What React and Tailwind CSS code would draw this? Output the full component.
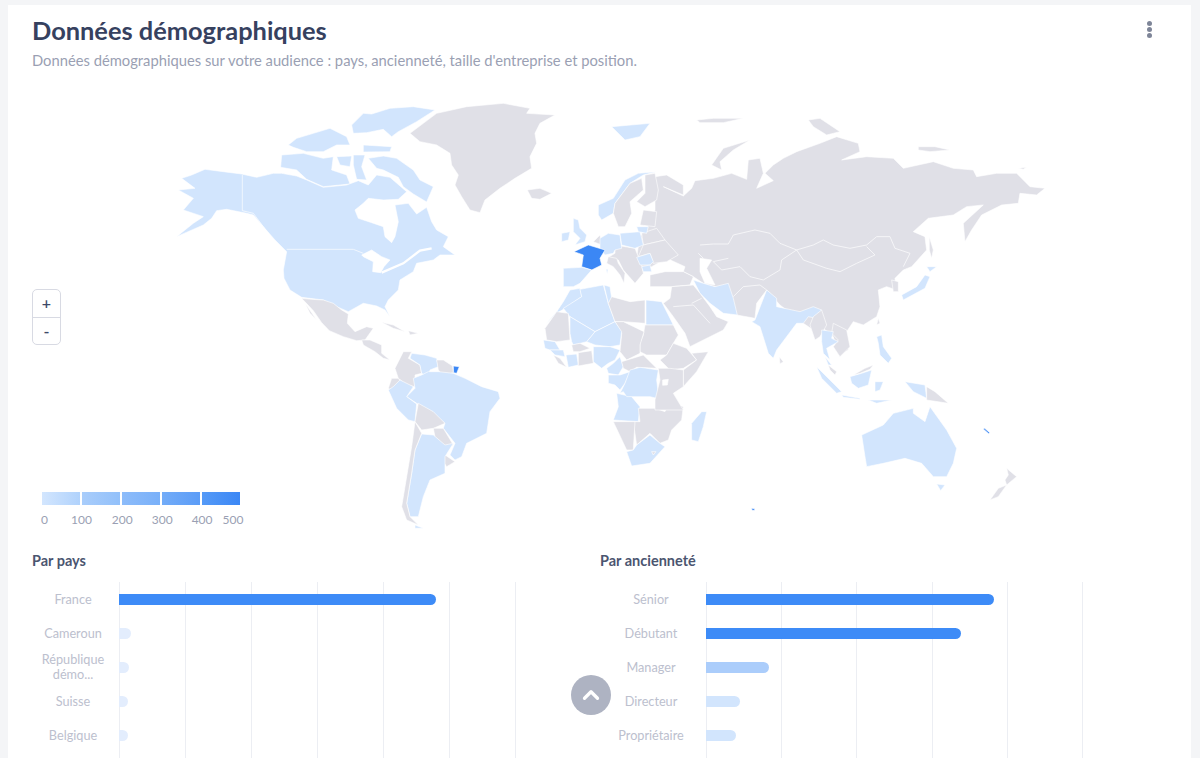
import React from 'react';
import { ChevronUp } from 'lucide-react';

const fills = {
  g: 'fill-[#e0e0e7]',
  l: 'fill-[#d2e5fd]',
  b: 'fill-[#3b87f5]',
  w: 'fill-white',
};

// each group is traced in its own 3x space, then scaled back on the map
const mapGroups = [
  {
    at: 'translate(150 90) scale(0.3333)',
    shapes: [
      ['l', '605,105 640,70 665,72 720,55 790,50 855,60 800,95 745,125 725,140 700,118 650,128 610,130'],
      ['l', '640,165 725,170 720,185 640,186'],
      ['l', '415,165 440,145 490,130 540,115 590,140 600,165 560,165 520,185 470,185 430,172'],
      ['l', '395,195 460,190 520,205 550,200 545,240 590,255 600,282 520,290 470,268 440,240 392,232'],
      ['l', '560,200 605,198 600,230 570,225'],
      ['l', '610,195 645,195 635,230 650,270 620,268 610,225'],
      ['l', '655,205 700,198 740,205 790,240 810,270 850,290 830,336 790,312 760,290 745,262 700,240 680,235'],
      ['l', '95,265 125,255 165,238 220,245 275,252 320,262 370,250 395,250 440,258 470,270 520,292 590,285 625,272 655,285 680,255 720,262 770,305 745,328 700,330 655,325 640,340 615,360 625,385 665,398 700,410 705,440 725,458 735,440 745,395 735,345 775,340 800,372 830,352 845,395 860,420 895,440 880,470 915,495 870,495 850,510 800,520 790,545 750,570 745,600 715,630 705,650 720,680 705,660 680,648 640,640 595,665 560,650 520,630 455,622 420,600 402,565 400,540 410,485 375,450 340,410 310,375 290,370 230,358 200,362 185,385 160,405 80,440 130,400 160,380 100,360 130,325 85,300 135,295'],
      ['w', '635,495 665,480 695,500 720,510 702,530 692,548 668,545 670,515 640,500'],
      ['g', '780,130 860,70 950,50 1060,40 1140,55 1130,70 1215,75 1170,100 1155,130 1160,160 1140,200 1145,235 1095,265 1050,295 1005,330 990,368 960,360 935,320 915,285 925,255 905,225 900,190 860,165 810,155'],
      ['g', '1132,300 1170,295 1205,310 1170,328 1145,325'],
    ],
    lines: ['277,255 277,362 310,370 370,450', '410,478 610,478 640,490'],
    channels: ['695,548 760,520 810,482 845,475'],
  },
  {
    at: 'translate(300 290) scale(0.3333)',
    shapes: [
      ['g', '5,25 35,28 70,30 100,40 125,60 145,72 142,100 165,125 200,110 220,115 195,150 170,152 130,140 88,122 65,98 40,62'],
      ['g', '15,40 50,90 30,70'],
      ['g', '185,150 210,150 245,165 245,190 270,210 250,205 225,185 190,165'],
      ['g', '245,97 280,105 315,125 280,115'],
      ['g', '325,122 355,130 330,135'],
      ['g', '310,185 335,185 325,205 360,225 365,250 345,255 345,290 320,285 295,265 285,235 295,215'],
      ['g', '265,295 275,265 295,265 310,285 275,302'],
      ['l', '335,190 375,195 410,205 415,230 390,240 385,262 365,250 360,225 330,205'],
      ['g', '410,210 430,210 458,228 460,248 430,258 415,240'],
    ],
    lines: [],
  },
  {
    at: 'translate(350 280) scale(0.3333)',
    shapes: [
      ['l', '170,350 195,325 190,295 215,285 235,275 265,275 310,280 345,295 395,320 445,335 450,355 420,395 410,460 350,490 335,530 315,540 300,525 315,490 280,445 285,430 250,400 200,370'],
      ['b', '310,258 328,260 320,280 311,278'],
      ['l', '115,330 130,320 150,300 190,320 170,350 200,372 195,425 175,420 140,385'],
      ['g', '205,370 250,395 285,430 250,445 215,450 195,425'],
      ['g', '250,445 280,445 310,495 290,505 255,470'],
      ['g', '285,525 315,545 290,560 280,545'],
      ['l', '215,462 250,465 285,495 310,490 285,530 285,580 240,600 220,650 205,710 180,710 170,670 185,580 195,510'],
      ['g', '195,425 215,460 195,510 185,580 170,670 180,710 205,735 170,720 155,680 170,590 185,500'],
      ['l', '195,735 220,745 195,745'],
      ['l', '800,340 845,350 870,380 865,425 790,420 805,380'],
      ['g', '865,385 915,385 945,395 960,365 1000,380 995,420 965,450 955,480 930,490 900,460 860,495 850,425 870,425'],
      ['g', '790,425 855,425 850,510 830,510'],
      ['l', '830,515 850,510 860,495 900,465 930,490 945,500 900,550 845,558'],
      ['g', '905,515 918,515 910,525'],
      ['l', '1055,395 1070,395 1060,440 1045,485 1025,480 1025,430'],
    ],
    lines: [],
  },
  {
    at: 'translate(540 280) scale(0.3333)',
    shapes: [
      ['l', '15,135 50,95 70,65 90,30 120,25 125,50 75,85 50,100'],
      ['l', '70,85 125,50 120,28 190,15 205,70 225,125 165,155 90,110'],
      ['l', '192,15 210,20 215,55 205,70'],
      ['g', '205,70 215,50 270,65 315,60 315,130 250,125 225,125'],
      ['l', '318,60 365,65 400,135 318,135'],
      ['g', '315,135 400,135 415,165 400,190 380,225 320,225 300,215 300,190 310,165'],
      ['g', '225,125 250,125 312,155 300,195 300,220 260,240 240,215 245,160'],
      ['l', '165,155 225,125 245,155 240,195 210,200 165,195 140,185'],
      ['l', '90,110 165,155 140,185 100,195 95,185 90,160'],
      ['g', '15,145 50,95 85,100 90,180 50,185 20,180'],
      ['l', '10,180 45,185 60,210 30,210 15,205'],
      ['l', '30,210 70,210 75,230 45,225'],
      ['g', '95,195 120,190 150,205 120,215 100,215'],
      ['g', '40,225 60,235 80,262 55,250'],
      ['l', '78,225 110,222 115,255 85,262'],
      ['g', '115,218 155,212 160,250 115,258'],
      ['l', '160,200 210,200 240,210 225,240 205,250 185,265 160,245'],
      ['l', '240,230 250,260 235,285 205,280 200,265 220,250'],
      ['l', '205,285 240,285 270,275 255,310 240,330 225,315 205,310'],
      ['g', '245,245 310,225 350,265 290,262 270,275 250,265'],
      ['l', '270,270 300,262 355,270 350,300 355,340 350,355 330,350 300,350 260,350 250,335 240,340 255,310'],
      ['g', '400,190 440,205 470,240 430,265 390,270 360,240 380,225'],
      ['g', '455,220 505,215 470,275 430,320 430,270 470,240'],
      ['g', '355,265 390,265 430,270 430,320 400,340 430,390 345,390 345,360 360,300'],
      ['w', '368,300 385,298 382,315 368,316'],
    ],
    lines: [],
  },
  {
    at: 'translate(600 90) scale(0.3333)',
    shapes: [
      ['g', '165,260 200,255 250,285 250,315 190,290 250,318 275,295 285,272 340,265 395,250 440,268 445,210 480,205 490,250 470,295 520,272 495,250 520,225 550,205 590,185 660,160 710,140 775,160 780,185 725,210 800,200 880,205 910,235 1000,215 1060,235 1120,240 1130,260 1190,250 1250,250 1290,290 1335,295 1310,315 1260,310 1255,340 1205,345 1145,375 1115,420 1095,455 1090,400 1150,345 1100,350 1060,375 985,385 940,425 975,440 980,480 935,530 910,540 885,565 890,600 860,590 835,600 840,650 830,680 790,705 760,695 740,725 745,780 715,795 700,740 670,715 640,720 610,700 540,645 500,600 470,640 465,685 410,675 400,640 385,600 345,590 310,580 280,560 250,545 255,530 200,505 155,530 130,540 110,500 120,440 150,400 165,360'],
      ['w', '300,505 335,510 320,535 345,585 315,580 300,545'],
      ['l', '280,570 310,580 345,590 385,580 400,625 412,675 370,670 330,640 300,610'],
      ['g', '150,555 195,545 250,545 280,560 270,585 215,590 150,590'],
      ['g', '190,640 210,625 215,590 280,585 300,610 330,650 350,680 385,695 370,720 270,770 255,730 220,680'],
      ['l', '465,690 500,600 530,625 530,650 600,665 640,650 665,660 650,685 625,680 610,700 590,700 530,780 520,805 505,790 480,710 455,695'],
      ['g', '538,800 550,815 540,822'],
      ['g', '640,680 665,660 680,705 660,740 645,750 630,705'],
      ['g', '700,700 740,720 750,770 720,800 700,770 715,750 695,730'],
      ['l', '665,720 700,725 695,745 715,755 680,775 690,810 670,790 665,755'],
      ['g', '875,570 895,575 895,605 880,605'],
      ['l', '905,615 950,590 975,555 990,560 975,595 910,630'],
      ['l', '980,530 1010,530 990,545'],
      ['g', '988,440 1000,480 995,505 988,480'],
      ['g', '335,225 370,175 450,150 400,180 360,215 365,240'],
      ['g', '625,90 660,85 720,125 680,135 640,110'],
      ['g', '955,170 1005,170 1050,180 990,185 955,180'],
      ['g', '1255,235 1280,232 1270,238'],
      ['g', '290,90 340,85 430,85 370,98 300,98'],
      ['l', '35,110 150,100 120,140 75,150'],
    ],
    lines: [
      '300,465 340,462 385,462 400,435 465,420 510,430 540,460 590,480 640,465 670,450 700,465 750,475 800,465 830,440 870,440 885,475 930,490 910,530',
      '590,480 610,510 680,535 720,545 770,520 825,495 800,470',
      '590,480 545,510 540,540 490,570 450,560 420,530 365,540 340,515 385,505',
      '295,490 310,505',
      '400,620 430,590 480,585 500,600',
      '275,640 305,625',
      '220,650 280,645 330,700',
    ],
  },
  {
    at: 'translate(550 170) scale(0.3333)',
    shapes: [
      ['l', '145,105 190,85 225,30 265,10 320,5 280,15 240,40 195,100 190,130 155,150 145,135'],
      ['g', '195,100 240,40 275,25 280,60 240,95 245,130 225,170 205,170 190,130'],
      ['g', '285,15 315,10 325,60 320,90 285,110 260,95 285,70'],
      ['g', '280,120 320,125 315,170 270,165'],
      ['l', '70,145 85,150 90,175 110,195 105,215 75,225 90,205 70,185'],
      ['l', '35,190 60,185 55,210 35,215'],
      ['g', '130,215 150,195 155,225'],
      ['g', '275,190 320,175 345,210 280,225'],
      ['g', '195,225 255,235 275,285 280,310 255,340 220,300 205,270 175,262 195,250'],
      ['l', '150,205 175,190 210,195 215,235 195,240 190,250 165,255 150,235'],
      ['l', '210,190 270,185 280,225 255,235 215,225'],
      ['l', '260,170 295,170 290,190 265,185'],
      ['g', '280,225 345,210 385,255 350,275 310,280 300,250 265,260'],
      ['b', '72,245 115,225 165,240 150,265 155,285 125,300 95,290 100,255'],
      ['l', '40,295 95,292 125,300 90,340 70,350 40,350'],
      ['g', '175,260 200,265 205,280 225,310 222,340 210,315 190,290 170,280'],
      ['l', '168,298 174,298 172,312'],
      ['l', '260,262 300,250 310,275 300,285 270,285'],
      ['l', '275,290 300,285 305,305 280,305'],
    ],
    lines: [],
  },
  {
    at: 'translate(750 280) scale(0.3333)',
    shapes: [
      ['l', '380,170 395,165 400,200 425,235 415,250 390,225 385,190'],
      ['g', '385,115 390,130 380,135'],
      ['g', '235,255 260,275 255,285 240,270'],
      ['l', '225,230 245,255 235,255'],
      ['l', '200,260 240,300 275,335 260,340 215,295'],
      ['l', '300,290 335,280 365,270 355,315 325,325 305,310'],
      ['g', '310,285 345,265 370,255 360,268 330,280'],
      ['l', '275,345 330,355 330,358 280,352'],
      ['l', '375,305 400,305 390,330 375,335'],
      ['l', '465,305 525,315 530,355 490,335'],
      ['g', '530,320 555,335 595,370 530,360'],
      ['l', '355,360 425,360 380,370'],
      ['l', '335,465 400,435 430,400 490,385 490,400 525,425 540,380 590,450 620,505 610,550 590,590 550,590 515,550 465,535 400,550 350,560 345,530'],
      ['l', '560,612 585,615 572,632'],
      ['g', '770,565 800,590 770,615 765,600 775,585'],
      ['g', '770,615 745,650 720,660 745,625'],
      ['b', '700,447 704,445 719,458 716,461'],
      ['b', '5,685 14,686 14,691 6,691'],
    ],
    lines: [],
  },
];

const legendSteps = [
  'from-[#d3e6fe] to-[#b0d2fc]',
  'from-[#a9cdfb] to-[#92c0fa]',
  'from-[#8dbcfa] to-[#79b0f9]',
  'from-[#73acf8] to-[#5b9cf7]',
  'from-[#559af7] to-[#3b87f5]',
];

const countries = [
  { label: 'France', width: 317, color: 'bg-[#3d8bf7]' },
  { label: 'Cameroun', width: 12, color: 'bg-[#e3edfd]' },
  { label: 'République démo...', width: 10, color: 'bg-[#e3edfd]' },
  { label: 'Suisse', width: 9, color: 'bg-[#e3edfd]' },
  { label: 'Belgique', width: 9, color: 'bg-[#e3edfd]' },
];

const seniority = [
  { label: 'Sénior', width: 288, color: 'bg-[#3d8bf7]' },
  { label: 'Débutant', width: 255, color: 'bg-[#3d8bf7]' },
  { label: 'Manager', width: 63, color: 'bg-[#abcdfb]' },
  { label: 'Directeur', width: 34, color: 'bg-[#d2e5fd]' },
  { label: 'Propriétaire', width: 30, color: 'bg-[#d2e5fd]' },
];

const WorldMap = () => (
  <svg viewBox="8 80 1183 460" className="block w-full h-full">
    {mapGroups.map((group) => (
      <g key={group.at} transform={group.at}>
        {group.shapes.map(([fill, points]) => (
          <polygon key={points} points={points} className={`${fills[fill]} stroke-white`} strokeWidth="1.8" strokeLinejoin="round" />
        ))}
        {group.lines.map((points) => (
          <polyline key={points} points={points} fill="none" className="stroke-white" strokeWidth="2" />
        ))}
        {(group.channels || []).map((points) => (
          <polyline key={points} points={points} fill="none" className="stroke-white" strokeWidth="7" />
        ))}
      </g>
    ))}
  </svg>
);

const BarChart = ({ title, rows, gridLines, plotClass, labelClass }) => (
  <div>
    <h3 className="text-[14.5px] leading-[18px] font-bold text-[#4b5570] mb-3">{title}</h3>
    <div className="relative h-[176px]">
      <div className={`absolute top-0 bottom-0 flex justify-between ${plotClass}`}>
        {gridLines.map((n) => (
          <div key={n} className="w-px h-full bg-[#eceef3]" />
        ))}
      </div>
      <div className="relative">
        {rows.map((row) => (
          <div key={row.label} className="flex items-center h-[34px]">
            <div className={`text-center text-[12.7px] leading-[15px] text-[#bcc0ce] ${labelClass}`}>{row.label}</div>
            <div className={`h-[11px] rounded-r-full ${row.color}`} style={{ width: row.width }} />
          </div>
        ))}
      </div>
    </div>
  </div>
);

const App = () => {
  return (
    <div className="relative h-[758px] overflow-hidden bg-[#f4f5f7] pl-2 pr-[9px] pt-[5px] font-['Lato',sans-serif]">
      <div className="h-full bg-white px-6 pt-[9px]">
        <div className="flex justify-between">
          <div>
            <h1 className="text-[25.4px] leading-8 font-bold text-[#36415f]">Données démographiques</h1>
            <p className="text-[14.75px] leading-5 mt-[4px] text-[#9a9fb3]">
              Données démographiques sur votre audience : pays, ancienneté, taille d'entreprise et position.
            </p>
          </div>
          <div className="flex flex-col gap-[1px] mt-[7px] mr-[15px]">
            <span className="w-[5px] h-[5px] rounded-full bg-[#7e8598]" />
            <span className="w-[5px] h-[5px] rounded-full bg-[#7e8598]" />
            <span className="w-[5px] h-[5px] rounded-full bg-[#7e8598]" />
          </div>
        </div>

        <div className="relative h-[460px] -mx-6 mt-[10px]">
          <WorldMap />
          <div className="absolute left-6 top-[209px] w-[29px] h-[56px] flex flex-col border border-[#d8dae3] rounded-[5px] bg-white text-[#3d4a68] text-base font-semibold">
            <button className="flex-1 flex items-center justify-center border-b border-[#d8dae3]">+</button>
            <button className="flex-1 flex items-center justify-center">-</button>
          </div>
          <div className="absolute left-[34px] top-[412px]">
            <div className="flex gap-[2px]">
              {legendSteps.map((step) => (
                <div key={step} className={`w-[38px] h-[13px] bg-gradient-to-r ${step}`} />
              ))}
            </div>
            <div className="flex mt-[7px] text-xs leading-4 text-[#9a9fb3]">
              <span className="ml-[-1px]">0</span>
              <span className="ml-[23px]">100</span>
              <span className="ml-[20px]">200</span>
              <span className="ml-[19px]">300</span>
              <span className="ml-[19px]">400</span>
              <span className="ml-[10px]">500</span>
            </div>
          </div>
        </div>

        <div className="grid grid-cols-[568px_1fr] mt-3">
          <BarChart
            title="Par pays"
            rows={countries}
            gridLines={[1, 2, 3, 4, 5, 6, 7]}
            plotClass="left-[87px] w-[397px]"
            labelClass="w-[82px] mr-[5px]"
          />
          <BarChart
            title="Par ancienneté"
            rows={seniority}
            gridLines={[1, 2, 3, 4, 5, 6]}
            plotClass="left-[106px] w-[377px]"
            labelClass="w-[102px] mr-1"
          />
        </div>
      </div>

      <button className="absolute left-[571px] top-[675px] w-10 h-10 rounded-full bg-[#aeb3c2] flex items-center justify-center text-white">
        <ChevronUp size={26} strokeWidth={3} />
      </button>
    </div>
  );
};

export default App;
